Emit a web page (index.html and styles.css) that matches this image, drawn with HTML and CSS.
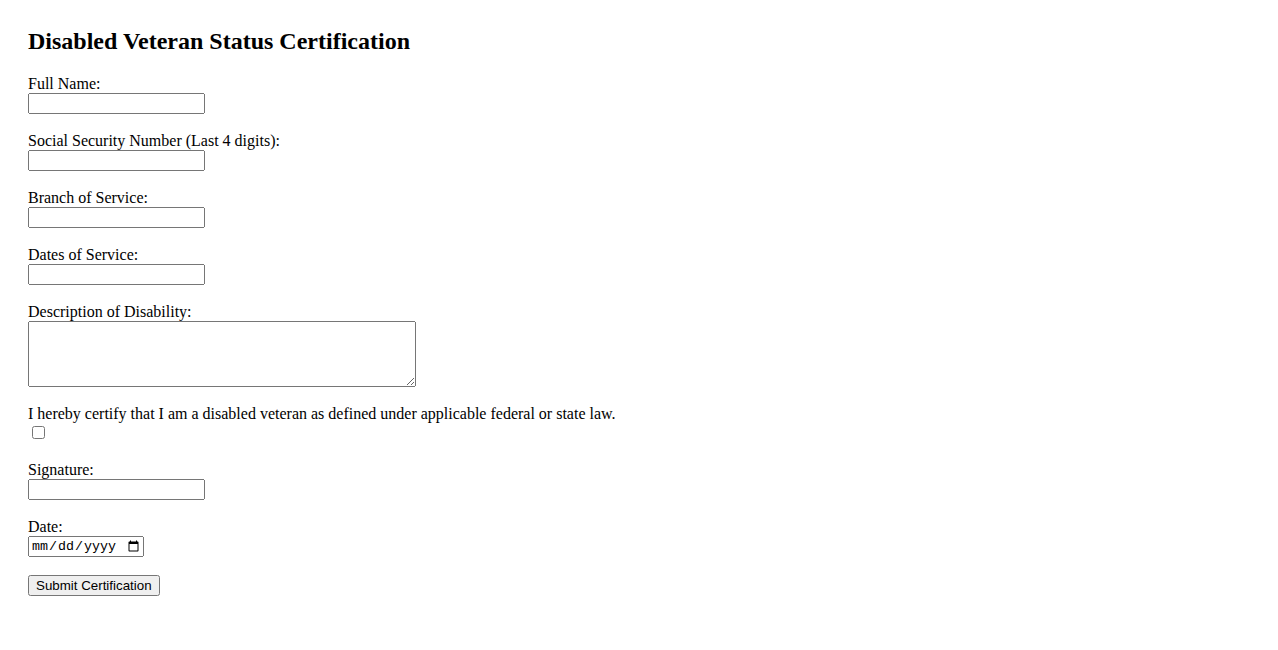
FILE: index.html
```html
<!DOCTYPE html>
<html lang="en">
<head>
  <meta charset="UTF-8" />
  <title>Disabled Veteran Status Certification</title>
  <link rel="stylesheet" href="styles.css">
</head>
<body>

<div class="page">
  <h2>Disabled Veteran Status Certification</h2>

  <form>
    <label for="name">Full Name:</label><br>
    <input type="text" id="name" name="name"><br><br>

    <label for="ssn">Social Security Number (Last 4 digits):</label><br>
    <input type="text" id="ssn" name="ssn"><br><br>

    <label for="branch">Branch of Service:</label><br>
    <input type="text" id="branch" name="branch"><br><br>

    <label for="dates">Dates of Service:</label><br>
    <input type="text" id="dates" name="dates"><br><br>

    <label for="disability">Description of Disability:</label><br>
    <textarea id="disability" name="disability" rows="4" cols="50"></textarea><br><br>

    <label for="certify">I hereby certify that I am a disabled veteran as defined under applicable federal or state law.</label><br>
    <input type="checkbox" id="certify" name="certify"><br><br>

    <label for="signature">Signature:</label><br>
    <input type="text" id="signature" name="signature"><br><br>

    <label for="date">Date:</label><br>
    <input type="date" id="date" name="date"><br><br>

    <button type="submit">Submit Certification</button>
  </form>
</div>

</body>
</html>
```

FILE: styles.css
```css
body {
  margin: 8px;
  font-family: "Liberation Serif", "Times New Roman", serif;
  font-size: 16px;
  color: #000;
  background: #fff;
}
.page { padding: 20px; }
h2 {
  margin: 0 0 20px;
  font-size: 24px;
}
input[type="text"] {
  width: 177px;
  height: 21px;
  box-sizing: border-box;
  font-family: "Liberation Sans", Arial, sans-serif;
  font-size: 13.33px;
  margin: 0;
}
textarea {
  width: 388px;
  height: 66px;
  box-sizing: border-box;
  margin: 0;
  vertical-align: bottom;
  font-family: "Liberation Mono", monospace;
  font-size: 13.33px;
}
input[type="checkbox"] {
  margin: 3px 3px 3px 4px;
}
input[type="date"] {
  width: 116px;
  height: 21px;
  box-sizing: border-box;
  margin: 0;
  font-family: "Liberation Mono", monospace;
  font-size: 13.33px;
}
button {
  font-family: "Liberation Sans", Arial, sans-serif;
  font-size: 13.33px;
  height: 21px;
  margin: 0;
}
```
